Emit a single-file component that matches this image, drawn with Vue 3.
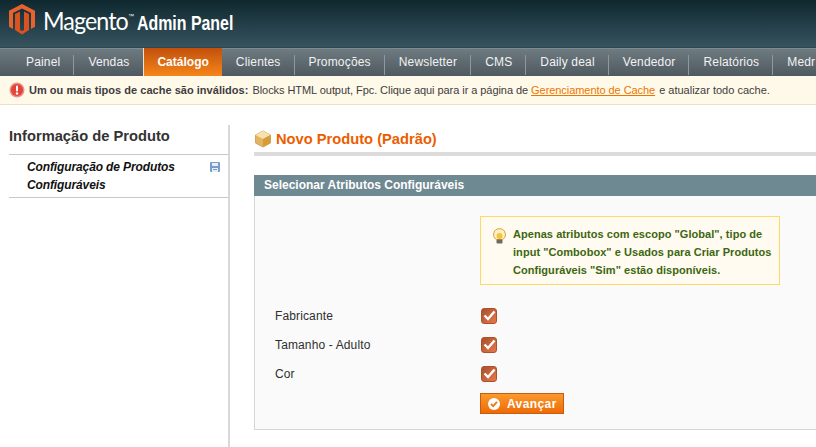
<template>
  <div class="admin">
    <header class="header">
      <svg class="logo-icon" width="26" height="31" viewBox="1 1 26 34" preserveAspectRatio="none">
        <path d="M14 1 L27 8.500 V26 L23 28.300 V11 L14 5.800 L5 11 V28.300 L1 26 V8.500 Z" fill="#e8622c" />
        <path d="M7 12 L12 9.200 V29.500 L14 30.700 L16 29.500 V9.200 L21 12 V29.500 L14 34.500 L7 29.500 Z" fill="#d9521f" />
      </svg>
      <span class="logo-name">Magento</span>
      <span class="logo-tm">™</span>
      <span class="logo-panel">Admin Panel</span>
    </header>

    <nav class="nav">
      <a
        v-for="item in menu"
        :key="item"
        class="nav-item"
        :class="{ active: item === 'Catálogo', beforeActive: item === 'Vendas' }"
      >{{ item }}</a>
    </nav>

    <div class="notice">
      <svg width="16" height="16" viewBox="0 0 16 16">
        <circle cx="8" cy="8" r="7.500" fill="#ee8f86" />
        <circle cx="8" cy="8" r="6" fill="#e2443a" />
        <rect x="7" y="3.500" width="2" height="6" rx="1" fill="#fff" />
        <circle cx="8" cy="11.500" r="1.200" fill="#fff" />
      </svg>
      <span>
        <strong>Um ou mais tipos de cache são inválidos:</strong>
        Blocks HTML output, Fpc. Clique aqui para ir a página de
        <a class="notice-link">Gerenciamento de Cache</a>
        <span class="notice-tail">e atualizar todo cache.</span>
      </span>
    </div>

    <div class="columns">
      <aside class="side">
        <h3 class="side-title">Informação de Produto</h3>
        <div class="side-item">
          <span>Configuração de Produtos Configuráveis</span>
          <svg class="save" width="10" height="10" viewBox="0 0 10 10">
            <rect x="0" y="0" width="10" height="10" rx="1" fill="#7a9cc8" />
            <rect x="2" y="1" width="6" height="3" fill="#e6eef8" />
            <rect x="2" y="6" width="6" height="4" fill="#e6eef8" />
            <rect x="3" y="7" width="4" height="1" fill="#7a9cc8" />
          </svg>
        </div>
      </aside>

      <main class="main">
        <div class="page-head">
          <svg width="18" height="18" viewBox="0 0 18 18">
            <path d="M9 1 L16.500 5 V13 L9 17 L1.500 13 V5 Z" fill="#e3b45f" stroke="#c99a45" stroke-width="0.800" />
            <path d="M1.500 5 L9 9 L16.500 5 L9 1 Z" fill="#f7e2ae" />
            <path d="M9 9 L16.500 5 V13 L9 17 Z" fill="#d69c3c" />
          </svg>
          <h3 class="page-title">Novo Produto (Padrão)</h3>
        </div>

        <section class="panel">
          <h4 class="panel-head">Selecionar Atributos Configuráveis</h4>
          <div class="panel-body">
            <div class="tip">
              <svg class="bulb" width="15" height="16" viewBox="0 0 15 16">
                <path d="M7.500 0.700 A5.800 5.800 0 0 1 10.500 11.500 H4.500 A5.800 5.800 0 0 1 7.500 0.700 Z" fill="#fdf0c4" stroke="#d8a23c" />
                <circle cx="7.500" cy="8" r="3" fill="#f5c33b" />
                <rect x="4.500" y="11.500" width="6" height="4" rx="1" fill="#6f6b60" />
              </svg>
              <p>Apenas atributos com escopo "Global", tipo de input "Combobox" e Usados para Criar Produtos Configuráveis "Sim" estão disponíveis.</p>
            </div>

            <label v-for="attr in attributes" :key="attr" class="attr-row">
              <span class="attr-name">{{ attr }}</span>
              <span class="check">
                <svg width="13" height="11" viewBox="0 0 13 11">
                  <path d="M1.500 5.500 L5 9 L11.500 1.500" fill="none" stroke="#fff" stroke-width="2.400" />
                </svg>
              </span>
            </label>

            <div class="actions">
              <button class="next" type="button">
                <svg width="12" height="12" viewBox="0 0 12 12">
                  <circle cx="6" cy="6" r="6" fill="#fff" />
                  <path d="M3 6 L5.200 8.200 L9 3.800" fill="none" stroke="#ee7a14" stroke-width="1.800" />
                </svg>
                Avançar
              </button>
            </div>
          </div>
        </section>
      </main>
    </div>
  </div>
</template>

<script setup>
const menu = [
  'Painel', 'Vendas', 'Catálogo', 'Clientes', 'Promoções', 'Newsletter',
  'CMS', 'Daily deal', 'Vendedor', 'Relatórios', 'Medr',
]
const attributes = ['Fabricante', 'Tamanho - Adulto', 'Cor']
</script>

<style>
html, body {
  margin: 0;
  overflow: hidden;
  background: #fff;
}
</style>

<style scoped>
.admin {
  width: 816px;
  height: 447px;
  overflow: hidden;
  font-family: "Liberation Sans", Arial, sans-serif;
  font-size: 12px;
  color: #2f2f2f;
}

.header {
  height: 47px;
  display: flex;
  align-items: flex-start;
  padding-left: 9px;
  background: linear-gradient(#0f2830, #36535e);
  color: #fff;
  border-bottom: 1px solid #2d4650;
}
.logo-icon {
  margin-top: 4px;
}
.logo-name {
  margin: 3px 0 0 8px;
  width: 85px;
  font-family: Lato, sans-serif;
  font-size: 25px;
  letter-spacing: -1px;
  line-height: 34px;
  transform: scaleX(0.93);
  transform-origin: left;
}
.logo-tm {
  font-size: 6px;
  margin-top: 13px;
}
.logo-panel {
  margin: 11px 0 0 3px;
  width: 96px;
  font-size: 20px;
  font-weight: bold;
  line-height: 24px;
  white-space: nowrap;
  transform: scaleX(0.795);
  transform-origin: left;
}

.nav {
  height: 28px;
  display: flex;
  padding-left: 12px;
  background: linear-gradient(#6d7a80, #4f5a60);
  border-top: 1px solid #7f8b90;
  box-sizing: border-box;
}
.nav-item {
  padding: 0 14px;
  line-height: 27px;
  color: #f2f2f2;
  font-size: 12px;
  letter-spacing: 0.170px;
  white-space: nowrap;
  position: relative;
  flex: none;
}
.nav-item::after {
  content: "";
  position: absolute;
  right: 0;
  top: 6px;
  bottom: 1px;
  width: 1px;
  background: #8d999e;
}
.nav-item.beforeActive::after,
.nav-item.active::after {
  display: none;
}
.nav-item.active {
  font-weight: bold;
  color: #fff;
  letter-spacing: 0;
  background: linear-gradient(#c2500c, #f5861a);
  border-left: 1px solid #f3e1cf;
  margin-top: -1px;
  line-height: 28px;
  padding: 0 13px;
}

.notice {
  height: 29px;
  display: flex;
  align-items: center;
  gap: 4px;
  padding-left: 9px;
  background: #fff9e9;
  border-bottom: 1px solid #eee2be;
  box-sizing: border-box;
  font-size: 11px;
  letter-spacing: -0.060px;
  color: #3d3d3d;
  white-space: nowrap;
}
.notice strong {
  letter-spacing: 0.030px;
  margin-right: 1px;
}
.notice-link {
  color: #ea7601;
  text-decoration: underline;
}
.notice-tail {
  letter-spacing: 0;
  margin-left: 4px;
}

.columns {
  display: flex;
  padding: 20px 0 0 9px;
  height: 342px;
}

.side {
  width: 219px;
  flex: none;
  border-right: 2px solid #d8d8d8;
}
.side-title {
  margin: 0;
  height: 29px;
  line-height: 22px;
  font-size: 14.700px;
  color: #333;
  border-bottom: 1px solid #c8c8c8;
}
.side-item {
  display: flex;
  justify-content: space-between;
  align-items: flex-start;
  padding: 3px 8px 3px 18px;
  border-bottom: 1px solid #c8c8c8;
  font-weight: bold;
  font-style: italic;
  letter-spacing: -0.120px;
  line-height: 18px;
  color: #111;
}
.side-item span {
  width: 170px;
}
.save {
  margin-top: 4px;
}

.main {
  width: 600px;
  flex: none;
  margin-left: 24px;
}
.page-head {
  display: flex;
  align-items: center;
  gap: 4px;
  height: 27px;
  border-bottom: 4px solid #dcdcdc;
}
.page-title {
  margin: 0;
  font-size: 14.700px;
  color: #eb5e00;
}

.panel {
  margin-top: 19px;
}
.panel-head {
  margin: 0;
  height: 21px;
  padding-left: 10px;
  line-height: 21px;
  font-size: 12px;
  color: #fff;
  background: #6f8992;
}
.panel-body {
  height: 234px;
  box-sizing: border-box;
  padding: 20px 0 0 20px;
  background: #fafafa;
  border-left: 1px solid #d6d6d6;
  border-bottom: 1px solid #d6d6d6;
}

.tip {
  display: flex;
  gap: 6px;
  margin: 0 0 16px 205px;
  width: 300px;
  height: 69px;
  box-sizing: border-box;
  padding: 8px 0 0 11px;
  background: #fffbf0;
  border: 1px solid #ffd967;
}
.tip p {
  margin: 0;
  font-size: 11px;
  font-weight: bold;
  letter-spacing: 0.050px;
  line-height: 18px;
  color: #3d6611;
}
.bulb {
  flex: none;
  margin-top: 3px;
}

.attr-row {
  display: flex;
  align-items: center;
  height: 29px;
}
.attr-name {
  width: 206px;
  letter-spacing: 0.130px;
}
.check {
  width: 16px;
  height: 16px;
  display: flex;
  align-items: center;
  justify-content: center;
  border-radius: 3px;
  background: linear-gradient(135deg, #a94f2b, #e8784a);
  border: 1px solid #a9532c;
  box-sizing: border-box;
}

.actions {
  margin: 5px 0 0 205px;
}
.next {
  width: 84px;
  height: 21px;
  display: flex;
  align-items: center;
  gap: 7px;
  padding: 0 0 0 7px;
  font: bold 12px "Liberation Sans", sans-serif;
  letter-spacing: 0.400px;
  color: #fff;
  background: linear-gradient(#fb9a2c, #ee6a05);
  border: 1px solid #c75b12;
}
</style>
